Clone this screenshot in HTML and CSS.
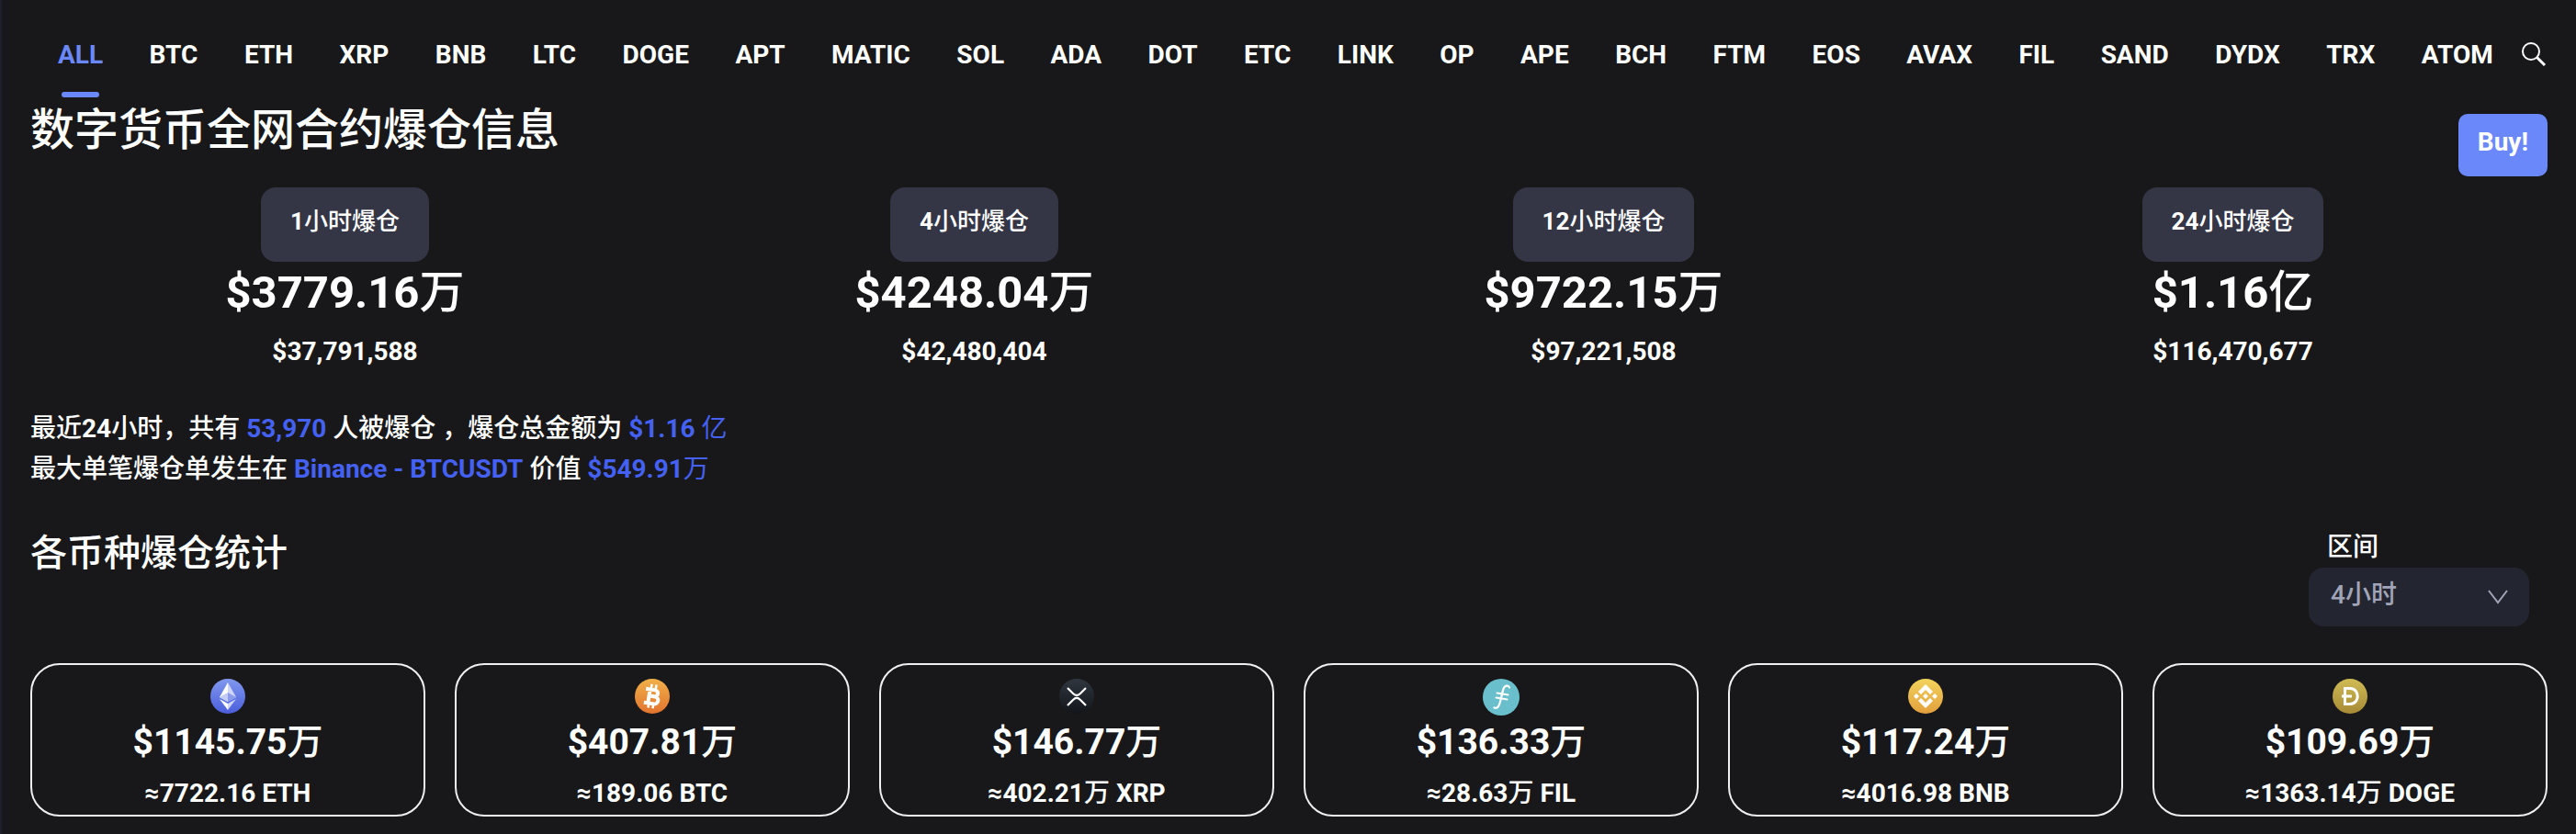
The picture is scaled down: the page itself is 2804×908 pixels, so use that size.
FILE: index.html
```
<!DOCTYPE html>
<html lang="zh-CN">
<head>
    <meta charset="UTF-8">
    <title>数字货币全网合约爆仓信息</title>
    <link rel="stylesheet" href="styles.css">
</head>
<body>
    <header class="topbar">
        <nav class="tabs">
            <a class="tab active" href="#">ALL</a>
            <a class="tab" href="#">BTC</a>
            <a class="tab" href="#">ETH</a>
            <a class="tab" href="#">XRP</a>
            <a class="tab" href="#">BNB</a>
            <a class="tab" href="#">LTC</a>
            <a class="tab" href="#">DOGE</a>
            <a class="tab" href="#">APT</a>
            <a class="tab" href="#">MATIC</a>
            <a class="tab" href="#">SOL</a>
            <a class="tab" href="#">ADA</a>
            <a class="tab" href="#">DOT</a>
            <a class="tab" href="#">ETC</a>
            <a class="tab" href="#">LINK</a>
            <a class="tab" href="#">OP</a>
            <a class="tab" href="#">APE</a>
            <a class="tab" href="#">BCH</a>
            <a class="tab" href="#">FTM</a>
            <a class="tab" href="#">EOS</a>
            <a class="tab" href="#">AVAX</a>
            <a class="tab" href="#">FIL</a>
            <a class="tab" href="#">SAND</a>
            <a class="tab" href="#">DYDX</a>
            <a class="tab" href="#">TRX</a>
            <a class="tab" href="#">ATOM</a>
        </nav>
        <button class="search" type="button" aria-label="搜索">
            <svg width="28" height="28" viewBox="0 0 28 28" fill="none" stroke="#fff" stroke-width="2">
                <circle cx="11" cy="11" r="9"/>
                <path d="M17.5 17.5L26 26" stroke-width="3"/>
            </svg>
        </button>
    </header>

    <main>
        <div class="title-row">
            <h1>数字货币全网合约爆仓信息</h1>
            <button class="buy" type="button">Buy!</button>
        </div>

        <section class="stats">
            <div class="stat">
                <span class="pill">1<span class="cn">小时爆仓</span></span>
                <div class="stat-value">$3779.16<span class="cn">万</span></div>
                <div class="stat-exact">$37,791,588</div>
            </div>
            <div class="stat">
                <span class="pill">4<span class="cn">小时爆仓</span></span>
                <div class="stat-value">$4248.04<span class="cn">万</span></div>
                <div class="stat-exact">$42,480,404</div>
            </div>
            <div class="stat">
                <span class="pill">12<span class="cn">小时爆仓</span></span>
                <div class="stat-value">$9722.15<span class="cn">万</span></div>
                <div class="stat-exact">$97,221,508</div>
            </div>
            <div class="stat">
                <span class="pill">24<span class="cn">小时爆仓</span></span>
                <div class="stat-value">$1.16<span class="cn">亿</span></div>
                <div class="stat-exact">$116,470,677</div>
            </div>
        </section>

        <section class="summary">
            <p>最近<b>24</b>小时，共有 <span class="hl">53,970</span> 人被爆仓 ，爆仓总金额为 <span class="hl">$1.16 <span class="cn">亿</span></span></p>
            <p>最大单笔爆仓单发生在 <span class="hl">Binance - BTCUSDT</span> 价值 <span class="hl">$549.91<span class="cn">万</span></span></p>
        </section>

        <div class="section-row">
            <h2>各币种爆仓统计</h2>
            <div class="range">
                <label for="range">区间</label>
                <div class="select-box">
                    <select id="range">
                        <option>1小时</option>
                        <option selected>4小时</option>
                        <option>12小时</option>
                        <option>24小时</option>
                    </select>
                    <svg class="arrow" width="22" height="16" viewBox="0 0 22 16" fill="none" stroke="#a1a5b7" stroke-width="2">
                        <path d="M1 1l10 13L21 1"/>
                    </svg>
                </div>
            </div>
        </div>

        <section class="cards">
            <div class="card">
                <svg class="coin" viewBox="0 0 38 38">
                    <defs><linearGradient id="eth" x2="0" y2="1"><stop stop-color="#8198ee"/><stop offset="1" stop-color="#4a5edb"/></linearGradient></defs>
                    <circle cx="19" cy="19" r="19" fill="url(#eth)"/>
                    <path d="M19 4l-9 16 9 5z" fill="#fff"/>
                    <path d="M19 4l9 16-9 5z" fill="#cfd6f8"/>
                    <path d="M19 15l-9 5 9 5z" fill="#c3ccf6"/>
                    <path d="M19 15l9 5-9 5z" fill="#8c9bea"/>
                    <path d="M10 22l9 5v7z" fill="#fff"/>
                    <path d="M28 22l-9 5v7z" fill="#cfd6f8"/>
                </svg>
                <div class="card-value">$1145.75<span class="cn">万</span></div>
                <div class="card-coin">≈7722.16 ETH</div>
            </div>
            <div class="card">
                <svg class="coin" viewBox="0 0 38 38">
                    <defs><linearGradient id="btc" x2="0" y2="1"><stop stop-color="#f0b04a"/><stop offset="1" stop-color="#e2742f"/></linearGradient></defs>
                    <circle cx="19" cy="19" r="19" fill="url(#btc)"/>
                    <g transform="rotate(9 19 19)" fill="none" stroke="#fff" stroke-width="4">
                        <path d="M11 12h10a3.500 3.500 0 0 1 0 7h-5M15 19h7a4 4 0 0 1 0 8H11M15.500 12v15"/>
                        <path d="M16.500 6v6M21.500 6v6M16.500 26v6M21.500 26v6" stroke-width="2.500"/>
                    </g>
                </svg>
                <div class="card-value">$407.81<span class="cn">万</span></div>
                <div class="card-coin">≈189.06 BTC</div>
            </div>
            <div class="card">
                <svg class="coin" viewBox="0 0 38 38">
                    <defs><linearGradient id="xrp" x2="0" y2="1"><stop stop-color="#30363f"/><stop offset="1" stop-color="#12161b"/></linearGradient></defs>
                    <circle cx="19" cy="19" r="19" fill="url(#xrp)"/>
                    <path d="M9 10l6 6q4 4 8 0l6-6M9 29l6-6q4-4 8 0l6 6" fill="none" stroke="#fff" stroke-width="2.200"/>
                </svg>
                <div class="card-value">$146.77<span class="cn">万</span></div>
                <div class="card-coin">≈402.21<span class="cn">万</span> XRP</div>
            </div>
            <div class="card">
                <svg class="coin coin-fil" viewBox="0 0 40 40">
                    <circle cx="20" cy="20" r="20" fill="#69bfcb"/>
                    <g fill="none" stroke="#fff" stroke-linecap="round">
                        <path d="M29 9.500c-1-3-5-2.500-6.500 1.500-1.500 4-2 9-3.500 14-1.200 4.500-3 8-6.500 6.500" stroke-width="2.200"/>
                        <path d="M15.500 15.500l12 2M14.500 20.500l12 2" stroke-width="2"/>
                    </g>
                </svg>
                <div class="card-value">$136.33<span class="cn">万</span></div>
                <div class="card-coin">≈28.63<span class="cn">万</span> FIL</div>
            </div>
            <div class="card">
                <svg class="coin" viewBox="0 0 38 38">
                    <defs><linearGradient id="bnb" x2="0" y2="1"><stop stop-color="#f2d35c"/><stop offset="1" stop-color="#e29f3c"/></linearGradient></defs>
                    <circle cx="19" cy="19" r="19" fill="url(#bnb)"/>
                    <g fill="#fff">
                        <path d="M19 6l8 8-3 3-5-5-5 5-3-3z"/>
                        <path d="M19 32l8-8-3-3-5 5-5-5-3 3z"/>
                        <path d="M19 16l3 3-3 3-3-3z"/>
                        <path d="M9 16l3 3-3 3-3-3z"/>
                        <path d="M29 16l3 3-3 3-3-3z"/>
                    </g>
                </svg>
                <div class="card-value">$117.24<span class="cn">万</span></div>
                <div class="card-coin">≈4016.98 BNB</div>
            </div>
            <div class="card">
                <svg class="coin" viewBox="0 0 38 38">
                    <defs><linearGradient id="doge" x2="0" y2="1"><stop stop-color="#cfbb55"/><stop offset="1" stop-color="#a78a35"/></linearGradient></defs>
                    <circle cx="19" cy="19" r="19" fill="url(#doge)"/>
                    <path d="M13.500 10.500H19c11 0 11 17 0 17h-5.500zM10 19h11" fill="none" stroke="#fff" stroke-width="3"/>
                </svg>
                <div class="card-value">$109.69<span class="cn">万</span></div>
                <div class="card-coin">≈1363.14<span class="cn">万</span> DOGE</div>
            </div>
        </section>
    </main>
</body>
</html>
```

FILE: styles.css
```
* {
    box-sizing: border-box;
}

body {
    margin: 0;
    min-height: 100vh;
    background: #18181a;
    border-left: 2px solid #1d1f2a;
    color: #fff;
    font-family: Roboto, "Noto Sans CJK SC", sans-serif;
    font-size: 28px;
    font-weight: 500;
    line-height: 44px;
}

button, select {
    font-family: inherit;
    font-size: 28px;
    border: none;
}

h1, h2, p {
    margin: 0;
}

.cn {
    font-weight: 500;
}

/* top tabs */
.topbar {
    display: flex;
    align-items: flex-start;
    padding: 36px 32px 0 61px;
    height: 106px;
}

.tabs {
    flex: 1;
    display: flex;
    justify-content: space-between;
}

.tab {
    position: relative;
    height: 70px;
    line-height: 48px;
    color: #fff;
    font-weight: 700;
    text-decoration: none;
}

.tab.active {
    color: #6a88f9;
}

.tab.active::after {
    content: "";
    position: absolute;
    left: 4px;
    right: 4px;
    bottom: 0;
    height: 6px;
    border-radius: 3px;
    background: #6a88f9;
}

.search {
    width: 28px;
    height: 28px;
    margin: 9px 0 0 30px;
    padding: 0;
    background: none;
    cursor: pointer;
}

.search svg {
    display: block;
}

main {
    padding: 0 31px 16px;
}

.title-row {
    display: flex;
    justify-content: space-between;
    align-items: flex-start;
    height: 98px;
}

h1 {
    font-size: 48px;
    line-height: 72px;
    font-weight: 500;
}

.buy {
    margin-top: 18px;
    padding: 0 21px 8px;
    height: 68px;
    border-radius: 10px;
    background: #6a88f9;
    color: #fff;
    font-weight: 700;
    cursor: pointer;
}

/* liquidation totals */
.stats {
    display: grid;
    grid-template-columns: repeat(4, 1fr);
}

.stat {
    display: flex;
    flex-direction: column;
    align-items: center;
    font-weight: 700;
}

.pill {
    height: 81px;
    padding: 15px 32px;
    border-radius: 16px;
    background: #343545;
    font-size: 26px;
}

.stat-value {
    font-size: 49px;
    line-height: 68px;
}

.stat-exact {
    line-height: 60px;
}

.summary {
    padding-top: 32px;
}

.hl {
    color: #4461f2;
    font-weight: 700;
}

.hl .cn {
    font-weight: 400;
}

/* per coin */
.section-row {
    display: flex;
    justify-content: space-between;
    align-items: flex-start;
    padding-top: 40px;
}

h2 {
    font-size: 40px;
    line-height: 60px;
    font-weight: 500;
}

.range {
    width: 240px;
    margin-right: 20px;
}

.range label {
    display: block;
    padding-left: 20px;
    line-height: 45px;
}

.select-box {
    position: relative;
}

.select-box select {
    display: block;
    width: 100%;
    height: 64px;
    padding: 0 24px 6px;
    border-radius: 16px;
    background: #232530;
    color: #a1a5b7;
    font-weight: 500;
    appearance: none;
}

.arrow {
    position: absolute;
    right: 23px;
    top: 24px;
    pointer-events: none;
}

.cards {
    display: grid;
    grid-template-columns: repeat(6, 1fr);
    gap: 32px;
    margin-top: 40px;
}

.card {
    display: flex;
    flex-direction: column;
    align-items: center;
    height: 167px;
    padding-top: 15px;
    border: 2px solid #f0f0f0;
    border-radius: 32px;
    font-weight: 700;
}

.coin {
    width: 38px;
    height: 38px;
    flex: none;
}

.coin-fil {
    width: 40px;
    height: 40px;
    margin-bottom: -2px;
}

.card-value {
    font-size: 39px;
    line-height: 62px;
}

.card-coin {
    line-height: 50px;
}
```
